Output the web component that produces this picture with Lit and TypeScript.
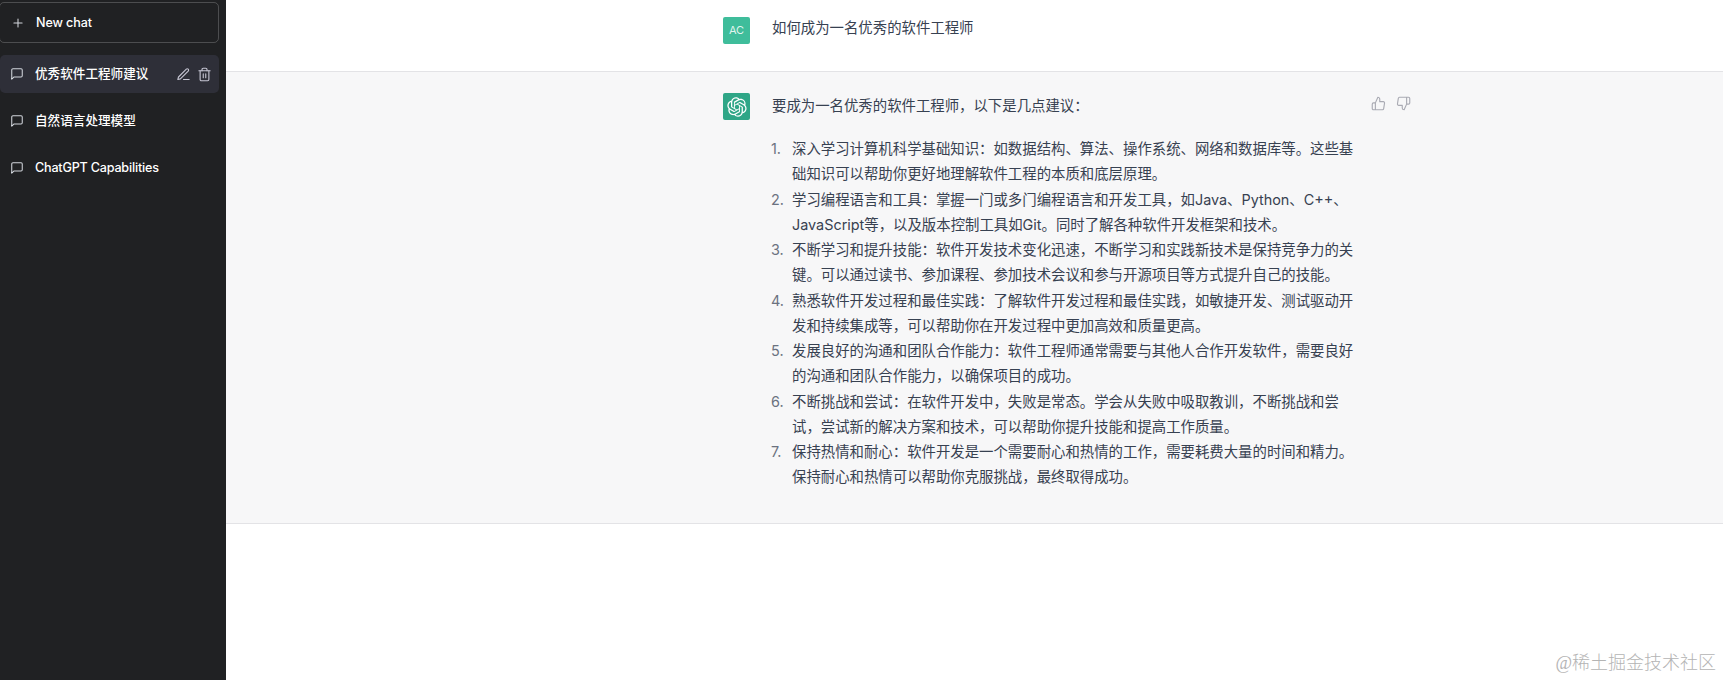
import { LitElement, html, css, svg } from "lit";
import { customElement } from "lit/decorators.js";

const items: string[] = [
  "深入学习计算机科学基础知识：如数据结构、算法、操作系统、网络和数据库等。这些基础知识可以帮助你更好地理解软件工程的本质和底层原理。",
  "学习编程语言和工具：掌握一门或多门编程语言和开发工具，如Java、Python、C++、JavaScript等，以及版本控制工具如Git。同时了解各种软件开发框架和技术。",
  "不断学习和提升技能：软件开发技术变化迅速，不断学习和实践新技术是保持竞争力的关键。可以通过读书、参加课程、参加技术会议和参与开源项目等方式提升自己的技能。",
  "熟悉软件开发过程和最佳实践：了解软件开发过程和最佳实践，如敏捷开发、测试驱动开发和持续集成等，可以帮助你在开发过程中更加高效和质量更高。",
  "发展良好的沟通和团队合作能力：软件工程师通常需要与其他人合作开发软件，需要良好的沟通和团队合作能力，以确保项目的成功。",
  "不断挑战和尝试：在软件开发中，失败是常态。学会从失败中吸取教训，不断挑战和尝试，尝试新的解决方案和技术，可以帮助你提升技能和提高工作质量。",
  "保持热情和耐心：软件开发是一个需要耐心和热情的工作，需要耗费大量的时间和精力。保持耐心和热情可以帮助你克服挑战，最终取得成功。",
];

const icon = (body: unknown, cls = "ic") => html`<svg class=${cls} viewBox="0 0 24 24" fill="none" stroke="currentColor" stroke-width="2" stroke-linecap="round" stroke-linejoin="round">${body}</svg>`;
const chatIcon = () => icon(svg`<path d="M21 15a2 2 0 0 1-2 2H7l-4 4V5a2 2 0 0 1 2-2h14a2 2 0 0 1 2 2z"></path>`);
const plusIcon = () => icon(svg`<line x1="12" y1="5" x2="12" y2="19"></line><line x1="5" y1="12" x2="19" y2="12"></line>`, "ic plus");
const editIcon = () => icon(svg`<path d="M12 20h9"></path><path d="M16.5 3.5a2.121 2.121 0 0 1 3 3L7 19l-4 1 1-4L16.5 3.5z"></path>`, "ic act");
const trashIcon = () => icon(svg`<polyline points="3 6 5 6 21 6"></polyline><path d="M19 6v14a2 2 0 0 1-2 2H7a2 2 0 0 1-2-2V6m3 0V4a2 2 0 0 1 2-2h4a2 2 0 0 1 2 2v2"></path><line x1="10" y1="11" x2="10" y2="17"></line><line x1="14" y1="11" x2="14" y2="17"></line>`, "ic act");
const upIcon = () => icon(svg`<path d="M14 9V5a3 3 0 0 0-3-3l-4 9v11h11.28a2 2 0 0 0 2-1.7l1.38-9a2 2 0 0 0-2-2.3zM7 22H4a2 2 0 0 1-2-2v-7a2 2 0 0 1 2-2h3"></path>`, "thumb");
const downIcon = () => icon(svg`<path d="M10 15v4a3 3 0 0 0 3 3l4-9V2H5.72a2 2 0 0 0-2 1.7l-1.38 9a2 2 0 0 0 2 2.3zm7-13h3a2 2 0 0 1 2 2v7a2 2 0 0 1-2 2h-3"></path>`, "thumb");

const logo = () => html`<svg class="logo" viewBox="0 0 41 41" fill="#fff"><path d="M37.5324 16.8707C37.9808 15.5241 38.1363 14.0974 37.9886 12.6859C37.8409 11.2744 37.3934 9.91076 36.676 8.68622C35.6126 6.83404 33.9882 5.3676 32.0373 4.4985C30.0864 3.62941 27.9098 3.40259 25.8215 3.85078C24.8796 2.7893 23.7219 1.94125 22.4257 1.36341C21.1295 0.785575 19.7249 0.491269 18.3058 0.500197C16.1708 0.495044 14.0893 1.16803 12.3614 2.42214C10.6335 3.67624 9.34853 5.44666 8.6917 7.47815C7.30085 7.76286 5.98686 8.3414 4.8377 9.17505C3.68854 10.0087 2.73073 11.0782 2.02839 12.312C0.956464 14.1591 0.498905 16.2988 0.721698 18.4228C0.944492 20.5467 1.83612 22.5449 3.268 24.1293C2.81966 25.4759 2.66413 26.9026 2.81182 28.3141C2.95951 29.7256 3.40701 31.0892 4.12437 32.3138C5.18791 34.1659 6.8123 35.6322 8.76321 36.5013C10.7141 37.3704 12.8907 37.5973 14.9789 37.1492C15.9208 38.2107 17.0786 39.0587 18.3747 39.6366C19.6709 40.2144 21.0755 40.5087 22.4946 40.4998C24.6307 40.5054 26.7133 39.8321 28.4418 38.5772C30.1704 37.3223 31.4556 35.5506 32.1119 33.5179C33.5027 33.2332 34.8167 32.6547 35.9659 31.821C37.115 30.9874 38.0728 29.9178 38.7752 28.684C39.8458 26.8371 40.3023 24.6979 40.0789 22.5748C39.8556 20.4517 38.9639 18.4544 37.5324 16.8707ZM22.4978 37.8849C20.7443 37.8874 19.0459 37.2733 17.6994 36.1501C17.7601 36.117 17.8666 36.0586 17.936 36.0161L25.9004 31.4156C26.1003 31.3019 26.2663 31.137 26.3813 30.9378C26.4964 30.7386 26.5563 30.5124 26.5549 30.2825V19.0542L29.9213 20.998C29.9389 21.0068 29.9541 21.0198 29.9656 21.0359C29.977 21.052 29.9842 21.0707 29.9867 21.0902V30.3889C29.9842 32.375 29.1946 34.2791 27.7909 35.6841C26.3872 37.0892 24.4838 37.8806 22.4978 37.8849ZM6.39227 31.0064C5.51397 29.4888 5.19742 27.7107 5.49804 25.9832C5.55718 26.0187 5.66048 26.0818 5.73461 26.1244L13.699 30.7248C13.8975 30.8408 14.1233 30.902 14.3532 30.902C14.583 30.902 14.8088 30.8408 15.0073 30.7248L24.731 25.1103V28.9979C24.7321 29.0177 24.7283 29.0376 24.7199 29.0556C24.7115 29.0736 24.6988 29.0893 24.6829 29.1012L16.6317 33.7497C14.9096 34.7416 12.8643 35.0097 10.9447 34.4954C9.02506 33.9811 7.38785 32.7263 6.39227 31.0064ZM4.29707 13.6194C5.17156 12.0998 6.55279 10.9364 8.19885 10.3327C8.19885 10.4013 8.19491 10.5228 8.19491 10.6071V19.808C8.19351 20.0378 8.25334 20.2638 8.36823 20.4629C8.48312 20.6619 8.64893 20.8267 8.84863 20.9404L18.5723 26.5542L15.206 28.4979C15.1894 28.5089 15.1703 28.5155 15.1505 28.5173C15.1307 28.5191 15.1107 28.516 15.0924 28.5082L7.04046 23.8557C5.32135 22.8601 4.06716 21.2235 3.55289 19.3046C3.03862 17.3858 3.30624 15.3413 4.29707 13.6194ZM31.955 20.0556L22.2312 14.4411L25.5976 12.4981C25.6142 12.4872 25.6333 12.4805 25.6531 12.4787C25.6729 12.4769 25.6928 12.4801 25.7111 12.4879L33.7631 17.1364C34.9967 17.849 36.0017 18.8982 36.6606 20.1613C37.3194 21.4244 37.6047 22.849 37.4832 24.2684C37.3617 25.6878 36.8382 27.0432 35.9743 28.1759C35.1103 29.3086 33.9415 30.1717 32.6047 30.6641C32.6047 30.5947 32.6047 30.4733 32.6047 30.3889V21.188C32.6066 20.9586 32.5474 20.7328 32.4332 20.5338C32.319 20.3348 32.154 20.1698 31.955 20.0556ZM35.3055 15.0128C35.2464 14.9765 35.1431 14.9142 35.069 14.8717L27.1045 10.2712C26.906 10.1554 26.6803 10.0943 26.4504 10.0943C26.2206 10.0943 25.9948 10.1554 25.7963 10.2712L16.0726 15.8858V11.9982C16.0715 11.9783 16.0753 11.9585 16.0837 11.9405C16.0921 11.9225 16.1048 11.9068 16.1207 11.8949L24.1719 7.25025C25.4053 6.53903 26.8053 6.16147 28.2311 6.15691C29.6568 6.15236 31.0592 6.5208 32.2983 7.21992C33.5374 7.91904 34.5 9 35.1 10.2C35.8 11.7 35.6 13.5 35.3055 15.0128ZM14.2664 21.8198L10.9 19.8761C10.8824 19.8673 10.8672 19.8543 10.8558 19.8382C10.8444 19.8221 10.8372 19.8034 10.8347 19.7839V10.4795C10.8355 9.05454 11.2423 7.65928 12.0076 6.45711C12.7729 5.25495 13.8652 4.29529 15.1565 3.69042C16.4478 3.08556 17.8845 2.86037 19.2984 3.04116C20.7123 3.22195 22.0449 3.80125 23.1404 4.7113C23.0797 4.74445 22.9741 4.80283 22.9039 4.84533L14.9395 9.44583C14.7396 9.55946 14.5735 9.72424 14.4583 9.92332C14.3431 10.1224 14.2829 10.3486 14.2839 10.5785L14.2664 21.8198ZM16.0951 17.8779L20.4262 15.3772L24.7572 17.8765V22.8764L20.4262 25.3757L16.0951 22.8764V17.8779Z"></path></svg>`;

@customElement("app-root")
export class AppRoot extends LitElement {
  static styles = css`
    :host {
      display: flex;
      height: 680px;
      overflow: hidden;
      position: relative;
      background: #fff;
      font-family: Inter, "Noto Sans CJK SC", sans-serif;
    }
    .sidebar {
      width: 226px;
      flex: none;
      background: #202123;
      color: #fff;
      padding: 2px 7px 0 0;
      box-sizing: border-box;
      display: flex;
      flex-direction: column;
      font-size: 12.6px;
      font-weight: 500;
    }
    .new {
      height: 41px;
      margin-left: -1px;
      border: 1px solid rgba(255, 255, 255, 0.2);
      border-radius: 5px;
      box-sizing: border-box;
      display: flex;
      align-items: center;
      padding-left: 11px;
      gap: 11px;
      margin-bottom: 12px;
      letter-spacing: -0.1px;
    }
    .item {
      height: 38px;
      margin-bottom: 9px;
      border-radius: 5px;
      display: flex;
      align-items: center;
      padding: 0 7px 0 10px;
      gap: 11px;
    }
    .item.active { background: #2e2f38; }
    .item .label { flex: 1; white-space: nowrap; line-height: 20px; }
    .item .label.en { letter-spacing: -0.2px; }
    .ic { width: 14px; height: 14px; flex: none; color: #d1d5db; stroke-width: 1.8; }
    .ic.plus { width: 14px; height: 14px; stroke-width: 1.8; }
    .ic.act { color: #c5c5d2; width: 15px; height: 15px; }
    .acts { display: flex; gap: 6px; }
    .main { flex: 1; display: flex; flex-direction: column; color: #374151; font-size: 14.4px; line-height: 25.23px; }
    .row { display: flex; padding-left: 497px; border-bottom: 1px solid #e3e3e6; }
    .row.user { padding-top: 17px; height: 54px; }
    .row.bot { background: #f7f7f8; padding-top: 21px; padding-bottom: 33px; }
    .avatar {
      width: 27px;
      height: 27px;
      border-radius: 2px;
      flex: none;
      margin-right: 22px;
      display: flex;
      align-items: center;
      justify-content: center;
    }
    .avatar.ac { background: #3fbd9b; color: rgba(255, 255, 255, 0.85); font-size: 11px; }
    .avatar.gpt { background: #2fa687; }
    .logo { width: 20px; height: 20px; }
    .q { margin-top: -2px; }
    .answer { width: 586px; flex: none; margin-top: 0; }
    .answer p { margin: 0 0 18px; }
    ol { list-style: none; margin: 0; padding: 0; }
    li { display: flex; }
    .num { width: 20px; flex: none; color: #6b7280; margin-left: -1px; padding-right: 1px; }
    .fb { display: flex; gap: 10px; margin-left: 13px; margin-top: 3px; color: #a9aab3; height: 16px; }
    .thumb { width: 15px; height: 15px; stroke-width: 1.8; }
    .mark {
      position: absolute;
      right: 7px;
      bottom: 5px;
      font-family: "Liberation Serif", "Noto Sans CJK SC", serif;
      font-size: 18px;
      line-height: 24px;
      font-weight: 300;
      color: #b4b4b4;
    }
  `;

  render() {
    return html`
      <aside class="sidebar">
        <div class="new">${plusIcon()}<span>New chat</span></div>
        <div class="item active">
          ${chatIcon()}<span class="label">优秀软件工程师建议</span>
          <span class="acts">${editIcon()}${trashIcon()}</span>
        </div>
        <div class="item">${chatIcon()}<span class="label">自然语言处理模型</span></div>
        <div class="item">${chatIcon()}<span class="label en">ChatGPT Capabilities</span></div>
      </aside>
      <main class="main">
        <section class="row user">
          <div class="avatar ac">AC</div>
          <div class="q">如何成为一名优秀的软件工程师</div>
        </section>
        <section class="row bot">
          <div class="avatar gpt">${logo()}</div>
          <div class="answer">
            <p>要成为一名优秀的软件工程师，以下是几点建议：</p>
            <ol>
              ${items.map((t, i) => html`<li><span class="num">${i + 1}.</span><span>${t}</span></li>`)}
            </ol>
          </div>
          <div class="fb">${upIcon()}${downIcon()}</div>
        </section>
      </main>
      <div class="mark">@稀土掘金技术社区</div>
    `;
  }
}
